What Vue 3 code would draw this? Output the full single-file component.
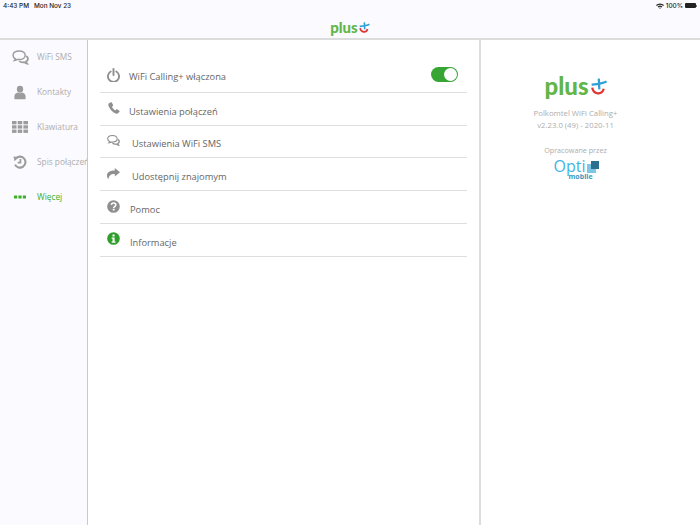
<script setup>
const nav = [
  { label: 'WiFi SMS', icon: 'chat' },
  { label: 'Kontakty', icon: 'user' },
  { label: 'Klawiatura', icon: 'grid' },
  { label: 'Spis połączeń', icon: 'history' },
  { label: 'Więcej', icon: 'more', active: true }
]
const rows = [
  { label: 'WiFi Calling+ włączona', icon: 'power', gap: 'g-a', toggle: true },
  { label: 'Ustawienia połączeń', icon: 'phone', gap: 'g-a' },
  { label: 'Ustawienia WiFi SMS', icon: 'chat', gap: 'g-b' },
  { label: 'Udostępnij znajomym', icon: 'share', gap: 'g-b' },
  { label: 'Pomoc', icon: 'help', gap: 'g-c' },
  { label: 'Informacje', icon: 'info', gap: 'g-c' }
]
</script>

<template>
  <div class="screen">
    <svg width="0" height="0" class="defs">
      <symbol id="chat" viewBox="0 0 18 16">
        <path d="M7.5 1C3.6 1 1 3 1 5.600c0 1.600 1 3 2.600 3.800-.2.700-.6 1.300-1.100 1.800 1.200-.1 2.300-.6 3.100-1.200.6.100 1.200.2 1.900.2 3.900 0 6.500-2 6.500-4.600S11.400 1 7.500 1z" fill="none" stroke="currentColor" stroke-width="1.500"/>
        <path d="M15 6.500c1.300.7 2 1.700 2 2.900 0 1.200-.8 2.300-2 2.900.1.800.5 1.500 1 2.200-1.300-.2-2.300-.7-3.100-1.500-.4.100-.9.100-1.400.100-1.600 0-3-.5-3.900-1.300" fill="none" stroke="currentColor" stroke-width="1.900"/>
      </symbol>
      <symbol id="user" viewBox="0 0 14 16">
        <ellipse cx="7" cy="4.200" rx="3.700" ry="4"/>
        <path d="M.5 16v-3.500C.5 9.800 2.500 8.300 4.500 8c.7.500 1.600.8 2.500.8s1.800-.3 2.500-.8c2 .3 4 1.800 4 4.500V16z"/>
      </symbol>
      <symbol id="grid" viewBox="0 0 16 12">
        <rect x="0" y="0" width="4.500" height="3.300"/><rect x="5.700" y="0" width="4.500" height="3.300"/><rect x="11.400" y="0" width="4.600" height="3.300"/>
        <rect x="0" y="4.300" width="4.500" height="3.300"/><rect x="5.700" y="4.300" width="4.500" height="3.300"/><rect x="11.400" y="4.300" width="4.600" height="3.300"/>
        <rect x="0" y="8.600" width="4.500" height="3.300"/><rect x="5.700" y="8.600" width="4.500" height="3.300"/><rect x="11.400" y="8.600" width="4.600" height="3.300"/>
      </symbol>
      <symbol id="history" viewBox="0 0 16 16">
        <path d="M3 4.200A6.300 6.300 0 1 1 2.300 11" fill="none" stroke="currentColor" stroke-width="2.400"/>
        <path d="M.5 1.500l5.600 1.300-4.300 4.300z"/>
        <path d="M8.500 4.500v4.300H5.300" fill="none" stroke="currentColor" stroke-width="2"/>
      </symbol>
      <symbol id="more" viewBox="0 0 12 4">
        <rect x="0" y=".5" width="3.200" height="3"/><rect x="4.400" y=".5" width="3.200" height="3"/><rect x="8.800" y=".5" width="3.200" height="3"/>
      </symbol>
      <symbol id="power" viewBox="0 0 14 15">
        <path d="M4 3.700a6 6 0 1 0 6 0" fill="none" stroke="currentColor" stroke-width="2" stroke-linecap="round"/>
        <path d="M7 1v6.500" fill="none" stroke="currentColor" stroke-width="2.100" stroke-linecap="round"/>
      </symbol>
      <symbol id="phone" viewBox="0 0 12 12">
        <path d="M2.800.3 1 1.300C.3 1.800.1 2.700.5 3.800c1.300 3.700 3.900 6.400 7.200 7.800 1 .4 2 .2 2.600-.5l1.200-1.400c.3-.4.200-.8-.2-1L9.100 7.300c-.4-.2-.7-.1-1 .2l-.8.9c-1.500-.8-2.600-2-3.300-3.600l.8-.7c.3-.3.400-.6.300-1L3.800.6C3.600.2 3.200.1 2.800.3z"/>
      </symbol>
      <symbol id="share" viewBox="0 0 15 13">
        <path d="M9 .2 15 5.200 9 10V7.200C5.200 7 2.800 8 1.500 13 .4 11.500 0 10 0 8.800 0 5 3.600 3 9 3z"/>
      </symbol>
      <symbol id="help" viewBox="0 0 14 14">
        <circle cx="7" cy="7" r="6.800"/>
        <path d="M4.700 5.300C4.800 3.900 5.800 3.200 7.100 3.200c1.400 0 2.400.8 2.400 2 0 1.900-2.300 1.800-2.300 3.300" fill="none" stroke="#fff" stroke-width="1.700"/>
        <rect x="6.200" y="9.400" width="2" height="1.900" fill="#fff"/>
      </symbol>
      <symbol id="info" viewBox="0 0 14 14">
        <circle cx="7" cy="7" r="6.800"/>
        <rect x="5.900" y="2.700" width="2.300" height="2.100" fill="#fff"/>
        <path d="M5 6h3.200v4.200H9.200v1.300H5v-1.300h1V7.300H5z" fill="#fff"/>
      </symbol>
    </svg>

    <header class="topbar">
      <div class="status">
        <span class="time">4:43 PM</span>
        <span class="date">Mon Nov 23</span>
        <span class="spacer"></span>
        <svg class="wifi" viewBox="0 0 10 7" width="8" height="6">
          <path d="M0 2.400a7 7 0 0 1 10 0L8.900 3.500a5.500 5.500 0 0 0-7.800 0z"/>
          <path d="M2 4.300a4.300 4.300 0 0 1 6 0L6.900 5.400a2.800 2.800 0 0 0-3.800 0z"/>
          <path d="M3.800 6a1.700 1.700 0 0 1 2.400 0L5 7z"/>
        </svg>
        <span class="pct">100%</span>
        <span class="battery"><span class="cap"></span></span>
      </div>
      <div class="brand">
        <span class="plus">plus</span>
        <svg class="mark" viewBox="0 0 14 15" width="11" height="11">
          <path d="M1 8.500C2 14.500 9.500 15.500 11.200 9.500" fill="none" stroke="#e2352f" stroke-width="2.200"/>
          <path d="M.5 6C5 5.500 10 5 13.700 3M6.800.5 7.300 10" fill="none" stroke="#2f9fd8" stroke-width="2.200"/>
        </svg>
      </div>
    </header>

    <div class="body">
      <nav class="sidebar">
        <div v-for="item in nav" :key="item.label" class="nav-item" :class="{ active: item.active }">
          <div class="nav-icon">
            <svg :class="['i-' + item.icon]"><use :href="'#' + item.icon" /></svg>
          </div>
          <span class="nav-label">{{ item.label }}</span>
        </div>
      </nav>

      <main class="main">
        <div class="list">
          <div v-for="row in rows" :key="row.label" class="row" :class="[row.gap, { first: row.toggle }]">
            <div class="row-icon" :class="{ green: row.icon === 'info' }">
              <svg :class="['r-' + row.icon]"><use :href="'#' + row.icon" /></svg>
            </div>
            <span class="row-label">{{ row.label }}</span>
            <span v-if="row.toggle" class="toggle"><span class="knob"></span></span>
          </div>
        </div>
      </main>

      <aside class="about">
        <div class="about-brand">
          <span class="about-plus">plus</span>
          <svg viewBox="0 0 14 15" width="16" height="17">
            <path d="M1 8.500C2 14.500 9.500 15.500 11.200 9.500" fill="none" stroke="#e2352f" stroke-width="2"/>
            <path d="M.5 6C5 5.500 10 5 13.700 3M6.800.5 7.300 10" fill="none" stroke="#2f9fd8" stroke-width="2"/>
          </svg>
        </div>
        <p class="version">Polkomtel WiFi Calling+<br>v2.23.0 (49) - 2020-11</p>
        <p class="by">Opracowane przez</p>
        <div class="opti">
          <div class="opti-top">
            <span class="opti-name">Opti</span>
            <span class="opti-cube"><span class="opti-front"></span></span>
          </div>
          <span class="opti-sub">mobile</span>
        </div>
      </aside>
    </div>
  </div>
</template>

<style>
html, body { margin: 0; padding: 0; }
</style>

<style scoped>
.screen {
  width: 700px;
  height: 525px;
  display: flex;
  flex-direction: column;
  overflow: hidden;
  background: #fbfaff;
  font-family: "Open Sans", "Noto Sans", sans-serif;
}
.defs { position: absolute; }

.topbar {
  height: 38px;
  flex: none;
  box-sizing: border-box;
  background: #fbfaff;
  display: flex;
  flex-direction: column;
}
.status {
  height: 11px;
  display: flex;
  align-items: center;
  padding: 0 3px;
  font: 500 6.400px Inter, sans-serif;
  color: #222;
}
.date { margin-left: 5px; }
.spacer { flex: 1; }
.wifi { fill: #222; margin-right: 2px; }
.pct { margin-right: 2px; }
.battery {
  width: 11px;
  height: 5px;
  background: #222;
  border-radius: 1px;
  position: relative;
  margin-right: 1px;
}
.cap {
  position: absolute;
  right: -1px;
  top: 1.500px;
  width: 1px;
  height: 2px;
  background: #777;
}
.brand {
  flex: 1;
  display: flex;
  align-items: flex-end;
  justify-content: center;
  gap: 1px;
  padding-bottom: 3px;
}
.plus {
  font: 900 15px/16px Lato, sans-serif;
  color: #62b547;
}
.mark { margin-bottom: 2px; }

.body {
  flex: 1;
  display: flex;
  min-height: 0;
  border-top: 2px solid #dcdcdc;
}
.sidebar {
  width: 87px;
  flex: none;
  overflow: hidden;
  background: #fbfaff;
}
.nav-item {
  height: 34.800px;
  display: flex;
  align-items: center;
  white-space: nowrap;
}
.nav-icon {
  width: 37px;
  flex: none;
  display: flex;
  justify-content: center;
  padding: 0 2px 0 5px;
  box-sizing: border-box;
  color: #9c9c9c;
}
.nav-icon svg { fill: currentColor; display: block; }
.i-chat { width: 17px; height: 15px; }
.i-user { width: 12px; height: 15px; }
.i-grid { width: 16px; height: 12px; }
.i-history { width: 14px; height: 14px; }
.i-more { width: 12px; height: 4px; }
.nav-label { font-size: 8.300px; line-height: 12px; color: #adadad; }
.active .nav-icon, .active .nav-label { color: #3fae2a; }

.main {
  width: 394px;
  flex: none;
  box-sizing: border-box;
  background: #fff;
  border-left: 1px solid #c9c9c9;
  border-right: 2px solid #dcdcdc;
  padding: 20px 12px 0;
}
.row {
  height: 32.800px;
  box-sizing: border-box;
  border-bottom: 1px solid #dedede;
  display: flex;
  align-items: center;
}
.row-icon {
  width: 13px;
  margin: 0 0 2px 7px;
  display: flex;
  justify-content: center;
  color: #8f8f8f;
  flex: none;
}
.row-icon svg { fill: currentColor; display: block; }
.row-icon.green { color: #2f9e2a; }
.r-power { width: 13px; height: 14px; }
.r-phone { width: 12px; height: 12px; }
.r-chat { width: 15px; height: 13px; }
.r-share { width: 15px; height: 13px; }
.r-help { width: 13px; height: 13px; }
.r-info { width: 13px; height: 13px; }
.row-label { font-size: 9.300px; line-height: 13px; padding-top: 5px; color: #666; }
.first .row-label { padding-top: 2px; }
.g-a .row-label { margin-left: 9px; }
.g-b .row-label { margin-left: 12px; }
.g-c .row-label { margin-left: 10px; }
.toggle {
  margin-left: auto;
  margin-right: 9px;
  margin-bottom: 2px;
  width: 27px;
  height: 15px;
  border-radius: 8px;
  background: #37a534;
  position: relative;
}
.knob {
  position: absolute;
  right: 1px;
  top: 1px;
  width: 13px;
  height: 13px;
  border-radius: 50%;
  background: #fff;
}

.about {
  flex: 1;
  background: #fff;
  display: flex;
  flex-direction: column;
  align-items: center;
  padding: 32px 30px 0 0;
  box-sizing: border-box;
  color: #adadad;
  font-size: 7.750px;
  line-height: 11px;
}
.about-brand { display: flex; align-items: center; gap: 2px; height: 28px; }
.about-plus {
  font: 900 24px/28px Lato, sans-serif;
  color: #62b547;
}
.version { margin: 8px 0 0; text-align: center; line-height: 11.500px; }
.by { margin: 14px 0 0; font-size: 7.200px; }
.opti { display: flex; flex-direction: column; margin-top: 3px; padding-left: 2px; }
.opti-top { display: flex; align-items: flex-start; }
.opti-name { font: 400 16px/15px "Open Sans", sans-serif; color: #45b4e4; }
.opti-cube {
  width: 9px;
  height: 9px;
  background: #7fc6e4;
  position: relative;
  margin: 5px 3px 0 2px;
}
.opti-front {
  position: absolute;
  right: -3px;
  top: -3px;
  width: 8px;
  height: 8px;
  background: #2d6f8f;
}
.opti-sub {
  font: 700 7px/6px "Open Sans", sans-serif;
  color: #3d97c0;
  margin: 0 0 0 15px;
}
</style>
